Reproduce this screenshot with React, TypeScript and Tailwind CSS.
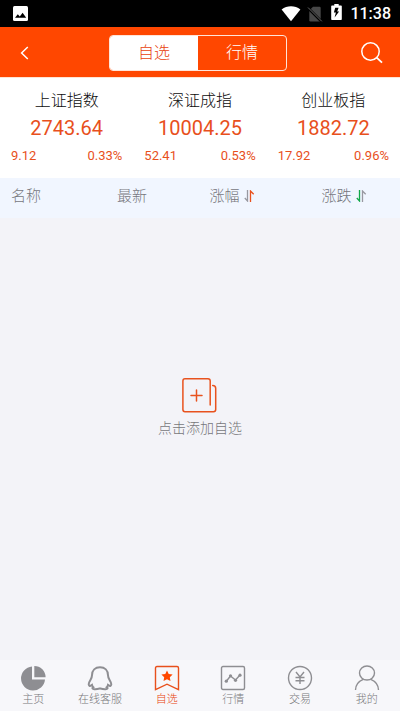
import { useState } from "react";
import type { ReactNode } from "react";

type Index = { name: string; price: string; change: string; percent: string };

const indices: Index[] = [
  { name: "上证指数", price: "2743.64", change: "9.12", percent: "0.33%" },
  { name: "深证成指", price: "10004.25", change: "52.41", percent: "0.53%" },
  { name: "创业板指", price: "1882.72", change: "17.92", percent: "0.96%" },
];

function StatusBar() {
  return (
    <div className="flex h-[27px] shrink-0 items-center bg-black pr-[9px] pl-[13px] text-white">
      <svg className="h-[15px] w-[15px]" viewBox="0 0 15 15" aria-hidden="true">
        <rect width="15" height="15" rx="1.5" fill="#fff" />
        <path d="M2 11.800 4.800 8.200l2 2.300 2.800-3.700 3.600 5Z" fill="#000" />
      </svg>
      <div className="ml-auto flex items-center">
        <svg className="h-4 w-5" viewBox="0 0 20 16" aria-hidden="true">
          <path d="M.6 3.500C6-.9 14-.9 19.400 3.500L10 15.200Z" fill="#fff" />
        </svg>
        <svg className="ml-[6px] h-4 w-4" viewBox="0 0 16 16" aria-hidden="true">
          <path d="M6 .8h6.500q1.200 0 1.200 1.200v12.200q0 1.200-1.200 1.200H3.500q-1.200 0-1.200-1.200V4.600Z" fill="#484848" />
          <path d="M1 2l13.500 13.500" stroke="#000" strokeWidth="2.600" />
          <path d="M1 1.500l13.800 13.800" stroke="#666" strokeWidth="1" />
        </svg>
        <svg className="mb-[3px] ml-2 h-4 w-[11px]" viewBox="0 0 11 16" aria-hidden="true">
          <path d="M3.300 0h4.400v1.500h2.300q.8 0 .8.8v12.900q0 .8-.8.8H1q-.8 0-.8-.8V2.300q0-.8.8-.8h2.300Z" fill="#fff" />
          <path d="M7.600 3.800H4.200L2.900 8.600h2l-1.300 5 4.500-6.200H6.200Z" fill="#000" />
        </svg>
        <span className="ml-2 text-base leading-5 font-medium">11:38</span>
      </div>
    </div>
  );
}

function Header() {
  const [tab, setTab] = useState(0);
  return (
    <header className="grid h-[51px] shrink-0 grid-cols-[1fr_auto_1fr] items-center border-b border-[#ffe4d4] bg-[#ff4700] pt-px pr-[17px] pl-[13px]">
      <button type="button" aria-label="返回" className="flex w-6 items-center">
        <svg className="ml-[7px] h-[14px] w-[9px]" viewBox="0 0 9 14" fill="none" stroke="#fff" strokeWidth="1.500" aria-hidden="true">
          <path d="M7.800 1 1.600 7l6.200 6" />
        </svg>
      </button>
      <div className="flex h-9 w-[178px] overflow-hidden rounded border border-[#ffe4d8] text-base font-light">
        {["自选", "行情"].map((label, i) => (
          <button
            key={label}
            type="button"
            aria-pressed={tab === i}
            onClick={() => setTab(i)}
            className={`flex flex-1 items-center justify-center ${tab === i ? "bg-white text-[#e8420c]" : "text-white"}`}
          >
            {label}
          </button>
        ))}
      </div>
      <button type="button" aria-label="搜索" className="flex w-6 justify-end justify-self-end">
        <svg className="h-[22px] w-[23px]" viewBox="0 0 23 22" fill="none" stroke="#fff" strokeWidth="1.500" aria-hidden="true">
          <circle cx="10.500" cy="9.500" r="8.700" />
          <path d="m16.700 15.700 5.300 5" strokeWidth="1.800" />
        </svg>
      </button>
    </header>
  );
}

function IndexCard({ item }: { item: Index }) {
  return (
    <div className="px-[11px] pt-[11px] pb-3 text-center text-[#e8501c]">
      <h2 className="text-base leading-6 font-light text-[#0c0c0c]">{item.name}</h2>
      <p className="mt-[3px] text-xl leading-6">{item.price}</p>
      <p className="mt-[6px] flex justify-between text-[13px] leading-5">
        <span>{item.change}</span>
        <span>{item.percent}</span>
      </p>
    </div>
  );
}

function SortIcon({ down, up }: { down: string; up: string }) {
  return (
    <svg className="h-3 w-[11px]" viewBox="0 0 11 12" fill="none" strokeWidth="1.300" aria-hidden="true">
      <path d="M3.500 0v11L.8 8" stroke={down} />
      <path d="M6.500 12V1l3.200 3.200" stroke={up} />
    </svg>
  );
}

function EmptyState() {
  return (
    <button type="button" className="flex flex-col items-center text-sm font-light text-[#77777b]">
      <svg className="mr-[2px] h-[35px] w-[35px]" viewBox="0 0 35 35" fill="none" stroke="#e8521e" strokeWidth="1.500" strokeLinecap="round" aria-hidden="true">
        <path d="M28.200 27V3q0-2.200-2.200-2.200H3Q.9.800.9 3v28.500q0 2.200 2.100 2.200h28.500q2.200 0 2.200-2.200V10.500q0-3-3-3" />
        <path d="M14.500 12v11M9 17.500h11" />
      </svg>
      <span className="mt-[5px] leading-5">点击添加自选</span>
    </button>
  );
}

const navItems: { label: string; icon: ReactNode }[] = [
  {
    label: "主页",
    icon: (
      <g fill="#8e8e92" stroke="none">
        <path d="M12 1.500A12 12 0 1 0 25 14.500H12Z" />
        <path d="M14.300 1v11.300H25.600A11.300 11.300 0 0 0 14.300 1Z" />
      </g>
    ),
  },
  {
    label: "在线客服",
    icon: (
      <path
        d="M13 2.300c-4.800 0-8 3.200-8 8 0 2-.6 3.200-1.700 5-1.700 2.700-2 4.700-.8 5.500.8.400 1.700-.4 2.500-.9.2 1 .6 1.700 1.300 2.300-1.500.9-.8 1.900 1 2 2.500.2 4-.3 5.700-.8 1.700.5 3.200 1 5.700.8 1.800-.1 2.500-1.100 1-2 .7-.6 1.100-1.300 1.300-2.300.8.500 1.700 1.300 2.500.9 1.200-.8.900-2.800-.8-5.500-1.100-1.800-1.700-3-1.700-5 0-4.800-3.200-8-8-8Z"
        strokeWidth="2"
      />
    ),
  },
  {
    label: "自选",
    icon: (
      <>
        <path d="M1.500 24.700V3q0-1.500 1.500-1.500h20q1.500 0 1.500 1.500v21.700L13 19.200Z" />
        <path d="m13 5.500 1.700 3.500 3.900.5-2.800 2.700.7 3.900-3.500-1.900-3.500 1.900.7-3.900-2.800-2.700 3.900-.5Z" fill="#ff4700" stroke="none" />
      </>
    ),
  },
  {
    label: "行情",
    icon: (
      <>
        <rect x="1.500" y="1.500" width="23" height="23" rx="1.500" />
        <path d="m6.500 16 4-5 5 4 4.500-5" />
        <g fill="#8e8e92" stroke="none">
          <circle cx="6.300" cy="16.200" r="1.600" />
          <circle cx="10.500" cy="10.800" r="1.600" />
          <circle cx="15.500" cy="15.300" r="1.600" />
          <circle cx="20" cy="10.200" r="1.600" />
        </g>
      </>
    ),
  },
  {
    label: "交易",
    icon: (
      <>
        <circle cx="13" cy="13" r="11.500" />
        <path d="m9 7 4 5 4-5M13 12v7M8.500 12.500h9M8.500 15.800h9" />
      </>
    ),
  },
  {
    label: "我的",
    icon: (
      <>
        <ellipse cx="13" cy="8" rx="7.500" ry="7" />
        <path d="M1.500 25c0-5 3.300-8.800 7.700-10.700M24.500 25c0-5-3.300-8.800-7.700-10.700" />
      </>
    ),
  },
];

function BottomNav() {
  return (
    <nav className="grid shrink-0 grid-cols-6 bg-[#f7f7fa] pt-[5px] pb-[3px] text-[11px] font-light">
      {navItems.map((item) => {
        const active = item.label === "自选";
        return (
          <a
            key={item.label}
            href="#"
            aria-current={active ? "page" : undefined}
            className={`flex flex-col items-center ${active ? "text-[#e8420c]" : "text-[#77777b]"}`}
          >
            <svg
              className={`h-[26px] w-[26px] ${active ? "stroke-[#e8501c]" : "stroke-[#8e8e92]"}`}
              viewBox="0 0 26 26"
              fill="none"
              strokeWidth="1.400"
              aria-hidden="true"
            >
              {item.icon}
            </svg>
            <span className="mt-px leading-4">{item.label}</span>
          </a>
        );
      })}
    </nav>
  );
}

export default function App() {
  return (
    <div className="flex min-h-screen flex-col bg-[#f3f3f8] font-[Roboto,'Noto_Sans_CJK_SC',sans-serif]">
      <StatusBar />
      <Header />
      <section className="grid grid-cols-3 bg-white">
        {indices.map((item) => (
          <IndexCard key={item.name} item={item} />
        ))}
      </section>
      <div className="grid h-10 shrink-0 grid-cols-[22fr_22fr_28fr_28fr] items-center bg-[#f1f6ff] pb-1 text-[15px] leading-6 font-light text-[#77777d]">
        <span className="pl-[11px]">名称</span>
        <span className="text-center">最新</span>
        <button type="button" className="flex items-center justify-center gap-1">
          涨幅
          <SortIcon down="#9898a0" up="#e8501c" />
        </button>
        <button type="button" className="flex items-center justify-center gap-1">
          涨跌
          <SortIcon down="#12a84a" up="#9898a0" />
        </button>
      </div>
      <main className="flex flex-1 flex-col items-center justify-center pb-[62px]">
        <EmptyState />
      </main>
      <BottomNav />
    </div>
  );
}
